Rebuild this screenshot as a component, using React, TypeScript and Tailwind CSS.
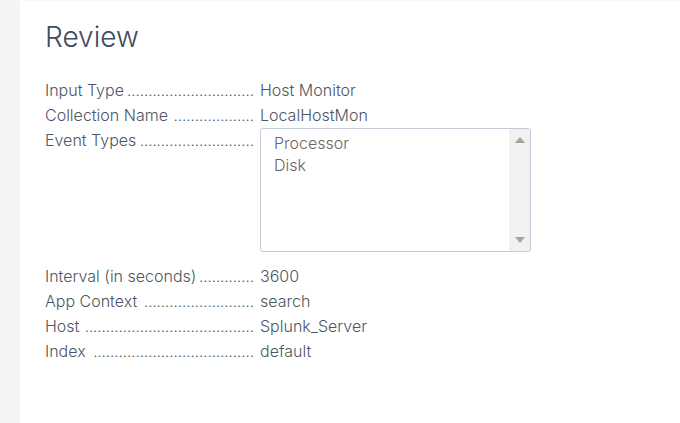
type RowData = { label: string; dots: number; value?: string };

const ROWS: RowData[] = [
  { label: "Input Type", dots: 30, value: "Host Monitor" },
  { label: "Collection Name", dots: 19, value: "LocalHostMon" },
  { label: "Event Types", dots: 27 },
  { label: "Interval (in seconds)", dots: 13, value: "3600" },
  { label: "App Context", dots: 26, value: "search" },
  { label: "Host", dots: 40, value: "Splunk_Server" },
  { label: "Index", dots: 38, value: "default" },
];

function EventTypes() {
  return (
    <div className="mb-3 flex h-31 w-full max-w-[271px] overflow-hidden rounded-[3px] border border-[#c3cbd8] bg-white">
      <select
        id="event-types"
        multiple
        disabled
        className="h-full min-w-0 flex-1 appearance-none overflow-hidden bg-transparent py-1 pl-[13px] font-light opacity-100"
      >
        <option className="h-[22px] p-0 leading-[22px] font-light text-[#66666a]">Processor</option>
        <option className="h-[22px] p-0 leading-[22px] font-light text-[#66666a]">Disk</option>
      </select>
      <div aria-hidden="true" className="flex w-[21px] flex-col items-center justify-between bg-[#f1f1f1] py-2">
        <svg width="10" height="6" viewBox="0 0 10 6" fill="#a3a3a3">
          <path d="M5 0 10 6H0Z" />
        </svg>
        <svg width="10" height="6" viewBox="0 0 10 6" fill="#a3a3a3">
          <path d="M0 0H10L5 6Z" />
        </svg>
      </div>
    </div>
  );
}

function Row({ label, dots, value }: RowData) {
  return (
    <div className="grid grid-cols-[209px_minmax(0,1fr)] gap-x-1.5">
      <dt className="flex items-baseline justify-between whitespace-nowrap">
        {value ? <span>{label}</span> : <label htmlFor="event-types">{label}</label>}
        <span aria-hidden="true" className="text-[15px]">
          {".".repeat(dots)}
        </span>
      </dt>
      <dd>{value ?? <EventTypes />}</dd>
    </div>
  );
}

export default function App() {
  return (
    <div className="min-h-screen bg-[#f2f4f5] pl-5 font-['Inter','Liberation_Sans',sans-serif]">
      <main className="min-h-screen border-t border-[#f7f8f8] bg-white px-6 pt-4">
        <h1 className="mb-5 pl-px text-[28px] leading-[41px] font-light text-[#3f4a5e]">Review</h1>
        <dl className="pl-px text-base leading-[25px] font-light text-[#4c5663]">
          {ROWS.map((row) => (
            <Row key={row.label} {...row} />
          ))}
        </dl>
      </main>
    </div>
  );
}
